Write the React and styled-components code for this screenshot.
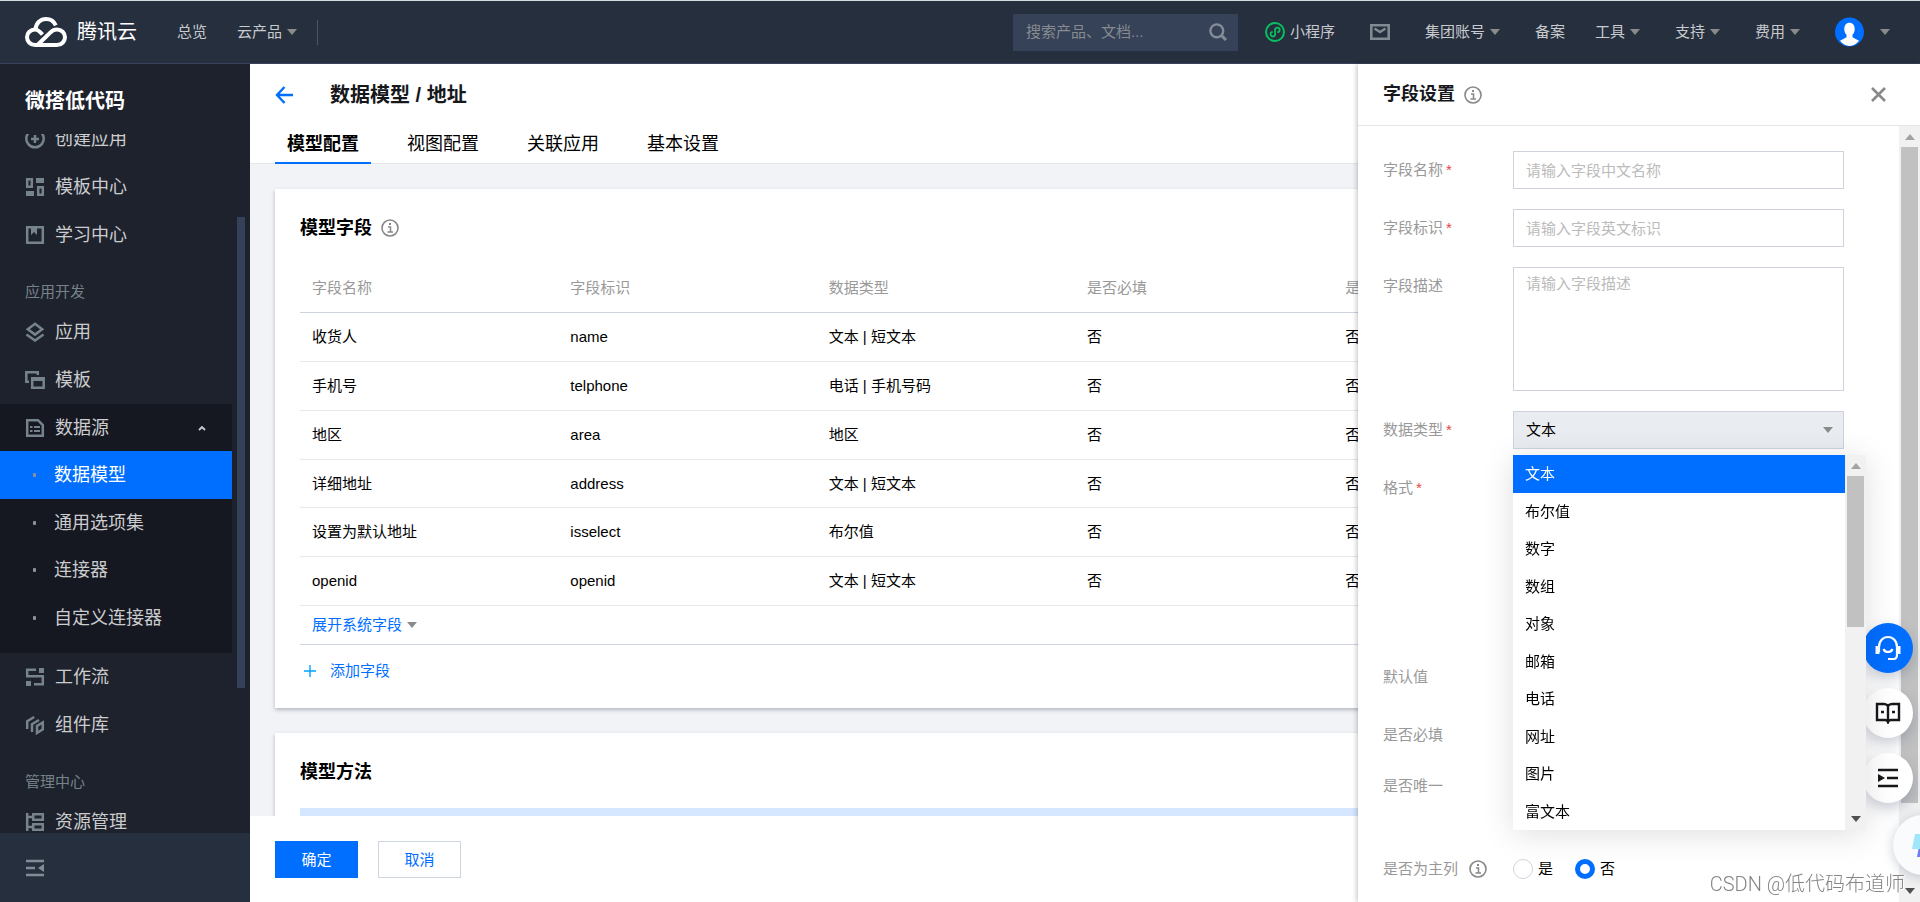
import React, { useState } from "react";
import styled, { createGlobalStyle, css } from "styled-components";

const BLUE = "#006eff";
const LINE = "#cfd5de";

const GlobalStyle = createGlobalStyle`
  *, *::before, *::after { box-sizing: border-box; }
  body {
    margin: 0;
    font-family: "Liberation Sans", "Noto Sans CJK SC", sans-serif;
    font-size: 15px;
    line-height: 20px;
    color: #000;
    background: #fff;
  }
  button, input, select, textarea { font: inherit; color: inherit; }
  button { border: 0; padding: 0; background: none; cursor: pointer; }
  a { color: inherit; text-decoration: none; }
  h1, h2, h3, ul { margin: 0; padding: 0; }
  ul { list-style: none; }
  svg { display: block; flex: none; }
`;

const Page = styled.div`
  display: flex;
  flex-direction: column;
  height: 100vh;
  overflow: hidden;
`;

const Workspace = styled.div`
  position: relative;
  display: flex;
  flex: 1;
  min-height: 0;
`;

/* ---------- top bar ---------- */

const TopBar = styled.header`
  display: flex;
  align-items: center;
  justify-content: space-between;
  height: 64px;
  padding: 0 30px 0 25px;
  background: #262f3e;
  border-top: 1px solid #d3dcdd;
  border-bottom: 1px solid #36435b;
  color: #c8cacd;
`;

const BarGroup = styled.div`
  display: flex;
  align-items: center;
`;

const Brand = styled.a`
  display: flex;
  align-items: center;
  gap: 10px;
  margin-right: 40px;
  font-size: 20px;
  color: #fff;
`;

const NavLinks = styled.nav`
  display: flex;
  align-items: center;
  gap: ${(p) => p.$gap}px;
`;

const NavLink = styled.a`
  display: flex;
  align-items: center;
  gap: 5px;
  margin-right: ${(p) => (p.$tight ? -5 : 0)}px;
`;

const Divider = styled.span`
  width: 1px;
  height: 25px;
  margin-left: 20px;
  background: #4b5464;
`;

const SearchBox = styled.label`
  display: flex;
  align-items: center;
  width: 225px;
  height: 37px;
  margin-right: 27px;
  padding: 0 11px 0 13px;
  background: #354258;

  input {
    flex: 1;
    min-width: 0;
    padding: 0;
    border: 0;
    outline: 0;
    background: none;
  }
  input::placeholder { color: #888b90; opacity: 1; }
`;

const Account = styled.button`
  display: flex;
  align-items: center;
  gap: 16px;
`;

/* ---------- sidebar ---------- */

const Sidebar = styled.aside`
  display: flex;
  flex: none;
  flex-direction: column;
  width: 250px;
  background: #1e222d;
  color: #cbccce;
  font-size: 18px;
`;

const SidebarTitle = styled.h2`
  height: 70px;
  padding: 2px 0 0 25px;
  font-size: 20px;
  line-height: 70px;
  color: #fff;
`;

const SidebarScroll = styled.div`
  display: flex;
  flex: 1;
  min-height: 0;
  overflow: hidden;
`;

const SidebarList = styled.nav`
  width: 232px;
  margin-top: -19px;
`;

const SidebarThumb = styled.div`
  width: 8px;
  height: 471px;
  margin: 83px 0 0 5px;
  background: #354158;
`;

const SidebarLabel = styled.h3`
  height: ${(p) => p.$height}px;
  padding: 17px 0 0 25px;
  font-size: 15px;
  font-weight: 400;
  line-height: 31px;
  color: #76828a;
`;

const SidebarItem = styled.a`
  display: flex;
  align-items: center;
  gap: 10px;
  height: 48px;
  padding: 0 26px 0 25px;
  svg { color: #76838c; }
`;

const SubMenu = styled.div`
  padding-bottom: 12px;
  background: #151721;
`;

const SubToggle = styled.button`
  display: flex;
  align-items: center;
  gap: 10px;
  width: 100%;
  height: 47px;
  padding: 0 26px 0 25px;
  font-size: 18px;
  text-align: left;
  span { flex: 1; }
  svg:first-child { color: #76838c; }
`;

const SubItem = styled.a`
  display: flex;
  align-items: center;
  height: 48px;
  padding-left: 33px;
  ${(p) => p.$active && css`background: ${BLUE}; color: #fff;`}
  &:nth-child(odd) { height: 47px; }

  &::before {
    content: "";
    width: 3px;
    height: 4px;
    margin-right: 18px;
    border-radius: 1px;
    background: #8b9197;
  }
`;

const SidebarFoot = styled.div`
  display: flex;
  align-items: center;
  flex: none;
  height: 69px;
  padding-left: 25px;
  background: #262f3e;
  color: #838c94;
`;

/* ---------- main column ---------- */

const Main = styled.main`
  display: flex;
  flex: 1;
  flex-direction: column;
  min-width: 0;
`;

const MainHead = styled.div`
  flex: none;
  padding: 0 25px;
  border-bottom: 1px solid #e4e6ea;
`;

const TitleRow = styled.div`
  display: flex;
  align-items: center;
  gap: 37px;
  height: 60px;
  padding-top: 1px;
  h1 { font-size: 20px; line-height: 28px; color: #16181c; }
`;

const BackLink = styled.a`color: ${BLUE};`;

const Tabs = styled.div`
  display: flex;
  gap: 24px;
  margin-bottom: -1px;
`;

const Tab = styled.button`
  height: 40px;
  padding: 2px 12px 0;
  border-bottom: 2px solid ${(p) => (p.$active ? BLUE : "transparent")};
  font-size: 18px;
  font-weight: ${(p) => (p.$active ? 700 : 400)};
`;

const Content = styled.div`
  flex: 1;
  min-height: 0;
  padding: 25px 45px 0 25px;
  overflow: hidden;
  background: #f2f3f7;
`;

const Card = styled.section`
  margin-bottom: 25px;
  padding: 26px 25px 11px;
  background: #fff;
  box-shadow: 0 2px 4px rgba(54, 58, 80, 0.32);
`;

const CardTitle = styled.h2`
  display: flex;
  align-items: center;
  gap: 9px;
  margin-bottom: 23px;
  font-size: 18px;
  line-height: 26px;
  svg { color: #888; }
`;

const FieldTable = styled.table`
  width: 100%;
  table-layout: fixed;
  border-spacing: 0;

  th, td {
    height: 49px;
    padding: 0 12px;
    border-bottom: 1px solid #e5e8ed;
    text-align: left;
    font-weight: 400;
  }
  th { color: #999; border-color: #cdd2e0; }
  tbody tr:nth-child(4n) td { height: 48px; }
  tfoot td { height: 39px; border-color: ${LINE}; }
`;

const ExpandButton = styled.button`
  display: flex;
  align-items: center;
  gap: 5px;
  color: ${BLUE};
`;

const AddButton = styled.button`
  display: flex;
  align-items: center;
  gap: 14px;
  height: 52px;
  padding-left: 4px;
  color: ${BLUE};
`;

const Notice = styled.div`
  height: 60px;
  background: #d5e7ff;
`;

const ActionBar = styled.footer`
  display: flex;
  flex: none;
  gap: 20px;
  height: 86px;
  padding: 25px;
`;

const ActionButton = styled.button`
  width: 83px;
  height: 37px;
  border: 1px solid ${(p) => (p.$primary ? BLUE : LINE)};
  background: ${(p) => (p.$primary ? BLUE : "#fff")};
  color: ${(p) => (p.$primary ? "#fff" : BLUE)};
`;

/* ---------- drawer ---------- */

const Drawer = styled.aside`
  position: absolute;
  top: 0;
  right: 0;
  bottom: 0;
  display: flex;
  flex-direction: column;
  width: 562px;
  background: #fff;
  box-shadow: -1px 0 5px rgba(0, 0, 0, 0.25);
`;

const DrawerHead = styled.div`
  display: flex;
  align-items: center;
  flex: none;
  gap: 9px;
  height: 62px;
  padding: 0 34px 0 25px;
  border-bottom: 1px solid #e5e5e5;
  color: #888;
  h2 { padding-bottom: 2px; font-size: 18px; color: #16181c; }
  button { margin-left: auto; }
`;

const DrawerBody = styled.div`
  display: flex;
  flex: 1;
  min-height: 0;
`;

const Form = styled.form`
  flex: 1;
  padding: 25px 55px 0 25px;
`;

const FormRow = styled.div`
  display: flex;
  min-height: ${(p) => p.$height || 38}px;
  margin-bottom: 20px;
`;

const FormLabel = styled.label`
  display: flex;
  align-items: center;
  flex: none;
  gap: 3px;
  width: 130px;
  height: ${(p) => p.$height || 38}px;
  color: #999;
  em { color: #e54545; font-style: normal; }
  svg { margin-left: 8px; color: #888; }
`;

const controlBox = css`
  width: 100%;
  padding: 0 12px;
  border: 1px solid #cfd3de;
  border-radius: 0;
  outline: 0;
  background: #fff;
  &::placeholder { color: #bbb; opacity: 1; }
`;

const TextInput = styled.input`
  ${controlBox}
  height: 38px;
`;

const TextArea = styled.textarea`
  ${controlBox}
  height: 124px;
  padding: 6px 12px;
  resize: none;
`;

const SelectWrap = styled.div`
  position: relative;
  flex: 1;
  > svg { position: absolute; top: 16px; right: 11px; color: #888; pointer-events: none; }
`;

const Select = styled.select`
  ${controlBox}
  height: 38px;
  background: #e9ecf1;
  appearance: none;
`;

const Popup = styled.div`
  position: absolute;
  z-index: 30;
  top: 44px;
  left: 0;
  right: -22px;
  display: flex;
  background: #fff;
  box-shadow: 0 4px 30px rgba(0, 0, 0, 0.13);
`;

const OptionList = styled.ul`flex: 1;`;

const Option = styled.li`
  height: 38px;
  padding: 0 12px;
  line-height: 37px;
  &:nth-child(even) { height: 37px; }
  ${(p) => p.$active && css`background: ${BLUE}; color: #fff;`}
`;

const RadioLabel = styled.label`
  display: flex;
  align-items: center;
  gap: 5px;
  margin-right: 22px;
`;

const Radio = styled.input`
  width: 20px;
  height: 20px;
  margin: 0;
  border: 1px solid #cfd5de;
  border-radius: 50%;
  background: #fff;
  appearance: none;
  &:checked { border: 5px solid ${BLUE}; }
`;

const Track = styled.div`
  display: flex;
  flex: none;
  flex-direction: column;
  align-items: center;
  width: 21px;
  padding: 8px 0;
  background: #f1f1f1;
`;

const Thumb = styled.div`
  width: 17px;
  flex: ${(p) => p.$size};
  margin-top: 7px;
  background: #c1c1c1;
`;

const Rest = styled.div`
  flex: ${(p) => p.$size};
  margin-bottom: 8px;
`;

/* ---------- floating tools ---------- */

const FloatTools = styled.div`
  position: fixed;
  z-index: 20;
  right: 7px;
  bottom: 99px;
  display: flex;
  flex-direction: column;
  gap: 15px;
`;

const FloatButton = styled.button`
  display: flex;
  align-items: center;
  justify-content: center;
  width: 50px;
  height: 50px;
  border-radius: 50%;
  background: ${(p) => (p.$primary ? BLUE : "#fff")};
  color: ${(p) => (p.$primary ? "#fff" : "#16181c")};
  box-shadow: 0 6px 14px rgba(60, 80, 110, 0.28);
`;

const AssistantButton = styled.button`
  position: fixed;
  z-index: 20;
  right: -33px;
  bottom: 27px;
  display: flex;
  align-items: center;
  width: 60px;
  height: 60px;
  padding-left: 18px;
  border-radius: 50%;
  background: #fafbfd;
  box-shadow: 0 2px 12px rgba(60, 80, 110, 0.28);
`;

const Watermark = styled.div`
  position: fixed;
  z-index: 40;
  right: 15px;
  bottom: 4px;
  font-family: Roboto, "Noto Sans CJK SC", sans-serif;
  font-size: 20px;
  font-weight: 300;
  line-height: 28px;
  color: #858585;
  text-shadow: 1px 1px 1px #fff;
  pointer-events: none;
`;

/* ---------- drawings ---------- */

const Caret = ({ up, size = 10, color = "#8b8b8b" }) => (
  <svg width={size} height="6" viewBox="0 0 10 6" fill={color} preserveAspectRatio="none">
    <path d={up ? "M5 0l5 6H0z" : "M0 0h10L5 6z"} />
  </svg>
);

const Svg = ({ w = 20, h = 20, children, ...rest }) => (
  <svg width={w} height={h} viewBox={`0 0 ${w} ${h}`} fill="none" stroke="currentColor" strokeWidth="2" {...rest}>
    {children}
  </svg>
);

const CloudLogo = () => (
  <Svg w={42} h={30} strokeWidth="4">
    <path d="M10.500 12.500C11 6 15.500 2 21 2c4.500 0 8 2.500 9.800 6.300" />
    <path d="M17.500 17.500C14.500 14 12.500 12.500 10 12.500c-4.500 0-8 3.400-8 7.700S5.500 28 10 28h22c4.500 0 8-3.500 8-7.800s-3.500-7.700-8-7.700c-2.600 0-4.600 1-6.500 2.900L13 27.500" />
  </Svg>
);

const InfoIcon = () => (
  <Svg w={18} h={18}>
    <circle cx="9" cy="9" r="8" strokeWidth="1.600" />
    <path d="M7 8h2.500v5M6.500 13h5.500" strokeWidth="1.500" />
    <rect x="8" y="4" width="2" height="2" fill="currentColor" stroke="none" />
  </Svg>
);

const SearchIcon = () => (
  <Svg w={18} h={18} strokeWidth="2.400" color="#848c97">
    <circle cx="7.800" cy="7.800" r="6.400" />
    <path d="M12.400 12.400l4.600 4.600" strokeWidth="3" />
  </Svg>
);

const MiniIcon = () => (
  <Svg color="#07c160">
    <circle cx="10" cy="10" r="9" />
    <path d="M12.400 10.200a2.300 2.300 0 1 0-2.300-2.600v4.800a2.300 2.300 0 1 1-2.500-2.500" strokeWidth="1.800" />
  </Svg>
);

const MailIcon = () => (
  <Svg w={20} h={16} color="#7f8a93" strokeWidth="2.600">
    <path d="M1.300 1.300h17.400v13.400H1.300z" />
    <path d="M4.500 4.500L10 8l5.500-3.500" />
  </Svg>
);

const Avatar = () => (
  <svg width="29" height="30" viewBox="0 0 29 30">
    <circle cx="14.500" cy="15" r="14.500" fill={BLUE} />
    <path fill="#fff" d="M9.300 12c0-4 2-6.300 5.200-6.300s5.200 2.300 5.200 6.300c0 3-1 4.600-2.200 5.800v2.400l6.500 3.600A13.500 13.500 0 0 1 14.500 29a13.500 13.500 0 0 1-9.500-5.200l6.500-3.600v-2.400C10.300 16.600 9.300 15 9.300 12z" />
  </svg>
);

const BackIcon = () => (
  <Svg w={18} h={18} strokeWidth="2.400"><path d="M9.500 1L2 9l7.500 8M2 9h16" /></Svg>
);

const CloseIcon = () => (
  <Svg w={15} h={15} strokeWidth="2.600"><path d="M1 1l13 13M14 1L1 14" /></Svg>
);

const PlusIcon = () => (
  <Svg w={12} h={12} strokeWidth="1.400" color="#00a4ff"><path d="M6 0v12M0 6h12" /></Svg>
);

const ChevronUp = () => (
  <Svg w={8} h={6} strokeWidth="1.800"><path d="M1 5l3-3 3 3" /></Svg>
);

const MenuSvg = (props) => <Svg strokeWidth="2.500" {...props} />;

const icons = {
  create: (
    <MenuSvg><path d="M6 1.900a8.700 8.700 0 1 0 8 0M10 6v8M6 10h8" /></MenuSvg>
  ),
  center: (
    <MenuSvg>
      <path d="M2.200 2.200h4.600v7.600H2.200zM13.200 10.200h4.600v7.600h-4.600z" />
      <path d="M11 1h8v5h-8zM1 14h8v5H1z" fill="currentColor" stroke="none" />
    </MenuSvg>
  ),
  learn: (
    <MenuSvg><path d="M2.200 2.200h15.600v15.600H2.200z" /><path d="M6 2h6v8l-3-3-3 3z" fill="currentColor" stroke="none" /></MenuSvg>
  ),
  app: (
    <MenuSvg><path d="M10 1.800l7.200 5.400L10 12.600 2.800 7.200zM1.500 12.500l8.500 6 8.500-6" /></MenuSvg>
  ),
  template: (
    <MenuSvg><path d="M4 11.800H1.300V2.200h11.500V5M7.200 8.200h11.500v9.600H7.200z" /><path d="M7 8h12v3H7z" fill="currentColor" stroke="none" /></MenuSvg>
  ),
  data: (
    <MenuSvg><path d="M2.200 2.200h10.800l4.800 4.800v10.800H2.200z" /><path d="M9 9h6M9 13h6M5 9h2.500M5 13h2.500" strokeWidth="2" /></MenuSvg>
  ),
  flow: (
    <MenuSvg>
      <path d="M11 2.800H2.200v6.400h15.600v8H9" />
      <path d="M14 1h5v5h-5zM1 14h5v5H1z" fill="currentColor" stroke="none" />
    </MenuSvg>
  ),
  kit: (
    <MenuSvg><path d="M2.200 14V6.200l7-4.200M7 17V9.200l7-4.200M12 18v-7l5.800-3.600v7z" /></MenuSvg>
  ),
  resource: (
    <MenuSvg><path d="M2.200 1v18M2 5h5M2 15h5M8.200 2.200h9.600v5.600H8.200zM8.200 12.200h9.600v5.600H8.200z" /></MenuSvg>
  ),
  fold: (
    <MenuSvg><path d="M1 3h18M1 10h9M1 17h18" /><path d="M19 6v8l-6-4z" fill="currentColor" stroke="none" /></MenuSvg>
  ),
};

const HeadsetIcon = () => (
  <Svg w={28} h={28} strokeWidth="2.200">
    <path d="M5 18v-5c0-6 4-10 9-10s9 4 9 10v8c0 2.500-1 4-3.500 4H14" />
    <path d="M3.500 12v8M24.500 12v8" strokeWidth="4" />
    <path d="M9.500 15c1.500 4 7.500 4 9 0" />
  </Svg>
);

const BookIcon = () => (
  <Svg w={26} h={22} strokeWidth="2.400">
    <path d="M13 4c-1-1.500-2-2-4-2H2v16h8c1.500 0 2.500.5 3 2 .5-1.500 1.500-2 3-2h8V2h-7c-2 0-3 .5-4 2zM13 4v15M6 10h3M17 10h3" />
  </Svg>
);

const ListIcon = () => (
  <Svg w={22} h={20} strokeWidth="2.400">
    <path d="M1 2h20M10 10h11M1 18h20" />
    <path d="M1 6l7 4-7 4z" fill="currentColor" stroke="none" />
  </Svg>
);

const AssistantIcon = () => (
  <svg width="26" height="26" viewBox="0 0 26 26">
    <path d="M9 9h15l-3 16H6z" fill="#6f7df5" />
    <path d="M4 2h14l-3 15H1z" fill="#9fe6fb" />
  </svg>
);

const Scrollbar = ({ thumb, rest, top = "#a3a3a3", bottom = "#505050" }) => (
  <Track aria-hidden="true">
    <Caret up color={top} />
    <Thumb $size={thumb} />
    <Rest $size={rest} />
    <Caret color={bottom} />
  </Track>
);

/* ---------- data ---------- */

const rows = [
  ["收货人", "name", "文本 | 短文本"],
  ["手机号", "telphone", "电话 | 手机号码"],
  ["地区", "area", "地区"],
  ["详细地址", "address", "文本 | 短文本"],
  ["设置为默认地址", "isselect", "布尔值"],
  ["openid", "openid", "文本 | 短文本"],
];

const types = ["文本", "布尔值", "数字", "数组", "对象", "邮箱", "电话", "网址", "图片", "富文本"];

const Item = ({ icon, children }) => (
  <SidebarItem href="#">{icons[icon]}{children}</SidebarItem>
);

const LabelFor = ({ id, required, children, ...rest }) => (
  <FormLabel htmlFor={id} {...rest}>{children}{required && <em>*</em>}</FormLabel>
);

export default function App() {
  const [tab, setTab] = useState("模型配置");
  const [type, setType] = useState("文本");
  const [primary, setPrimary] = useState("否");

  return (
    <Page>
      <GlobalStyle />
      <TopBar>
        <BarGroup>
          <Brand href="#"><CloudLogo />腾讯云</Brand>
          <NavLinks $gap={30}>
            <NavLink href="#">总览</NavLink>
            <NavLink href="#">云产品<Caret /></NavLink>
          </NavLinks>
          <Divider />
        </BarGroup>
        <BarGroup>
          <SearchBox>
            <input type="text" aria-label="搜索" placeholder="搜索产品、文档..." />
            <SearchIcon />
          </SearchBox>
          <NavLinks $gap={35}>
            <NavLink href="#"><MiniIcon />小程序</NavLink>
            <NavLink href="#" aria-label="消息"><MailIcon /></NavLink>
            <NavLink href="#">集团账号<Caret /></NavLink>
            <NavLink href="#" $tight>备案</NavLink>
            <NavLink href="#">工具<Caret /></NavLink>
            <NavLink href="#">支持<Caret /></NavLink>
            <NavLink href="#">费用<Caret /></NavLink>
            <Account type="button" aria-label="账号"><Avatar /><Caret /></Account>
          </NavLinks>
        </BarGroup>
      </TopBar>

      <Workspace>
        <Sidebar>
          <SidebarTitle>微搭低代码</SidebarTitle>
          <SidebarScroll>
            <SidebarList>
              <Item icon="create">创建应用</Item>
              <Item icon="center">模板中心</Item>
              <Item icon="learn">学习中心</Item>
              <SidebarLabel $height={49}>应用开发</SidebarLabel>
              <Item icon="app">应用</Item>
              <Item icon="template">模板</Item>
              <SubMenu>
                <SubToggle type="button" aria-expanded="true">
                  {icons.data}<span>数据源</span><ChevronUp />
                </SubToggle>
                <SubItem href="#" $active>数据模型</SubItem>
                <SubItem href="#">通用选项集</SubItem>
                <SubItem href="#">连接器</SubItem>
                <SubItem href="#">自定义连接器</SubItem>
              </SubMenu>
              <Item icon="flow">工作流</Item>
              <Item icon="kit">组件库</Item>
              <SidebarLabel $height={49}>管理中心</SidebarLabel>
              <Item icon="resource">资源管理</Item>
            </SidebarList>
            <SidebarThumb />
          </SidebarScroll>
          <SidebarFoot>
            <button type="button" aria-label="收起">{icons.fold}</button>
          </SidebarFoot>
        </Sidebar>

        <Main>
          <MainHead>
            <TitleRow>
              <BackLink href="#" aria-label="返回"><BackIcon /></BackLink>
              <h1>数据模型 / 地址</h1>
            </TitleRow>
            <Tabs role="tablist">
              {["模型配置", "视图配置", "关联应用", "基本设置"].map((name) => (
                <Tab key={name} type="button" role="tab" aria-selected={tab === name} $active={tab === name} onClick={() => setTab(name)}>
                  {name}
                </Tab>
              ))}
            </Tabs>
          </MainHead>
          <Content>
            <Card>
              <CardTitle>模型字段<InfoIcon /></CardTitle>
              <FieldTable>
                <thead>
                  <tr>
                    {["字段名称", "字段标识", "数据类型", "是否必填", "是否唯一", ""].map((h) => <th key={h} scope="col">{h}</th>)}
                  </tr>
                </thead>
                <tbody>
                  {rows.map(([name, key, kind]) => (
                    <tr key={name}>
                      <td>{name}</td><td>{key}</td><td>{kind}</td><td>否</td><td>否</td><td />
                    </tr>
                  ))}
                </tbody>
                <tfoot>
                  <tr>
                    <td colSpan={6}><ExpandButton type="button">展开系统字段<Caret /></ExpandButton></td>
                  </tr>
                </tfoot>
              </FieldTable>
              <AddButton type="button"><PlusIcon />添加字段</AddButton>
            </Card>
            <Card>
              <CardTitle>模型方法</CardTitle>
              <Notice />
            </Card>
          </Content>
          <ActionBar>
            <ActionButton type="button" $primary>确定</ActionButton>
            <ActionButton type="button">取消</ActionButton>
          </ActionBar>
        </Main>

        <Drawer>
          <DrawerHead>
            <h2>字段设置</h2>
            <InfoIcon />
            <button type="button" aria-label="关闭"><CloseIcon /></button>
          </DrawerHead>
          <DrawerBody>
            <Form>
              <FormRow>
                <LabelFor id="name" required>字段名称</LabelFor>
                <TextInput id="name" type="text" placeholder="请输入字段中文名称" />
              </FormRow>
              <FormRow>
                <LabelFor id="key" required>字段标识</LabelFor>
                <TextInput id="key" type="text" placeholder="请输入字段英文标识" />
              </FormRow>
              <FormRow>
                <LabelFor id="desc">字段描述</LabelFor>
                <TextArea id="desc" placeholder="请输入字段描述" />
              </FormRow>
              <FormRow>
                <LabelFor id="type" required>数据类型</LabelFor>
                <SelectWrap>
                  <Select id="type" value={type} onChange={(e) => setType(e.target.value)}>
                    {types.map((t) => <option key={t}>{t}</option>)}
                  </Select>
                  <Caret />
                  <Popup>
                    <OptionList role="listbox" aria-label="数据类型">
                      {types.map((t) => (
                        <Option key={t} role="option" aria-selected={t === type} $active={t === type} onClick={() => setType(t)}>{t}</Option>
                      ))}
                    </OptionList>
                    <Scrollbar thumb={151} rest={182} />
                  </Popup>
                </SelectWrap>
              </FormRow>
              <FormRow $height={169}><LabelFor as="span" required>格式</LabelFor></FormRow>
              <FormRow><LabelFor as="span">默认值</LabelFor></FormRow>
              <FormRow><LabelFor as="span">是否必填</LabelFor></FormRow>
              <FormRow $height={56}><LabelFor as="span" $height={24}>是否唯一</LabelFor></FormRow>
              <FormRow role="radiogroup" aria-label="是否为主列">
                <LabelFor as="span">是否为主列<InfoIcon /></LabelFor>
                {["是", "否"].map((v) => (
                  <RadioLabel key={v}>
                    <Radio type="radio" name="primary" checked={primary === v} onChange={() => setPrimary(v)} />
                    {v}
                  </RadioLabel>
                ))}
              </FormRow>
            </Form>
            <Scrollbar thumb={657} rest={77} />
          </DrawerBody>
        </Drawer>
      </Workspace>

      <FloatTools>
        <FloatButton type="button" aria-label="客服" $primary><HeadsetIcon /></FloatButton>
        <FloatButton type="button" aria-label="文档"><BookIcon /></FloatButton>
        <FloatButton type="button" aria-label="展开列表"><ListIcon /></FloatButton>
      </FloatTools>
      <AssistantButton type="button" aria-label="助手"><AssistantIcon /></AssistantButton>
      <Watermark>CSDN @低代码布道师</Watermark>
    </Page>
  );
}
